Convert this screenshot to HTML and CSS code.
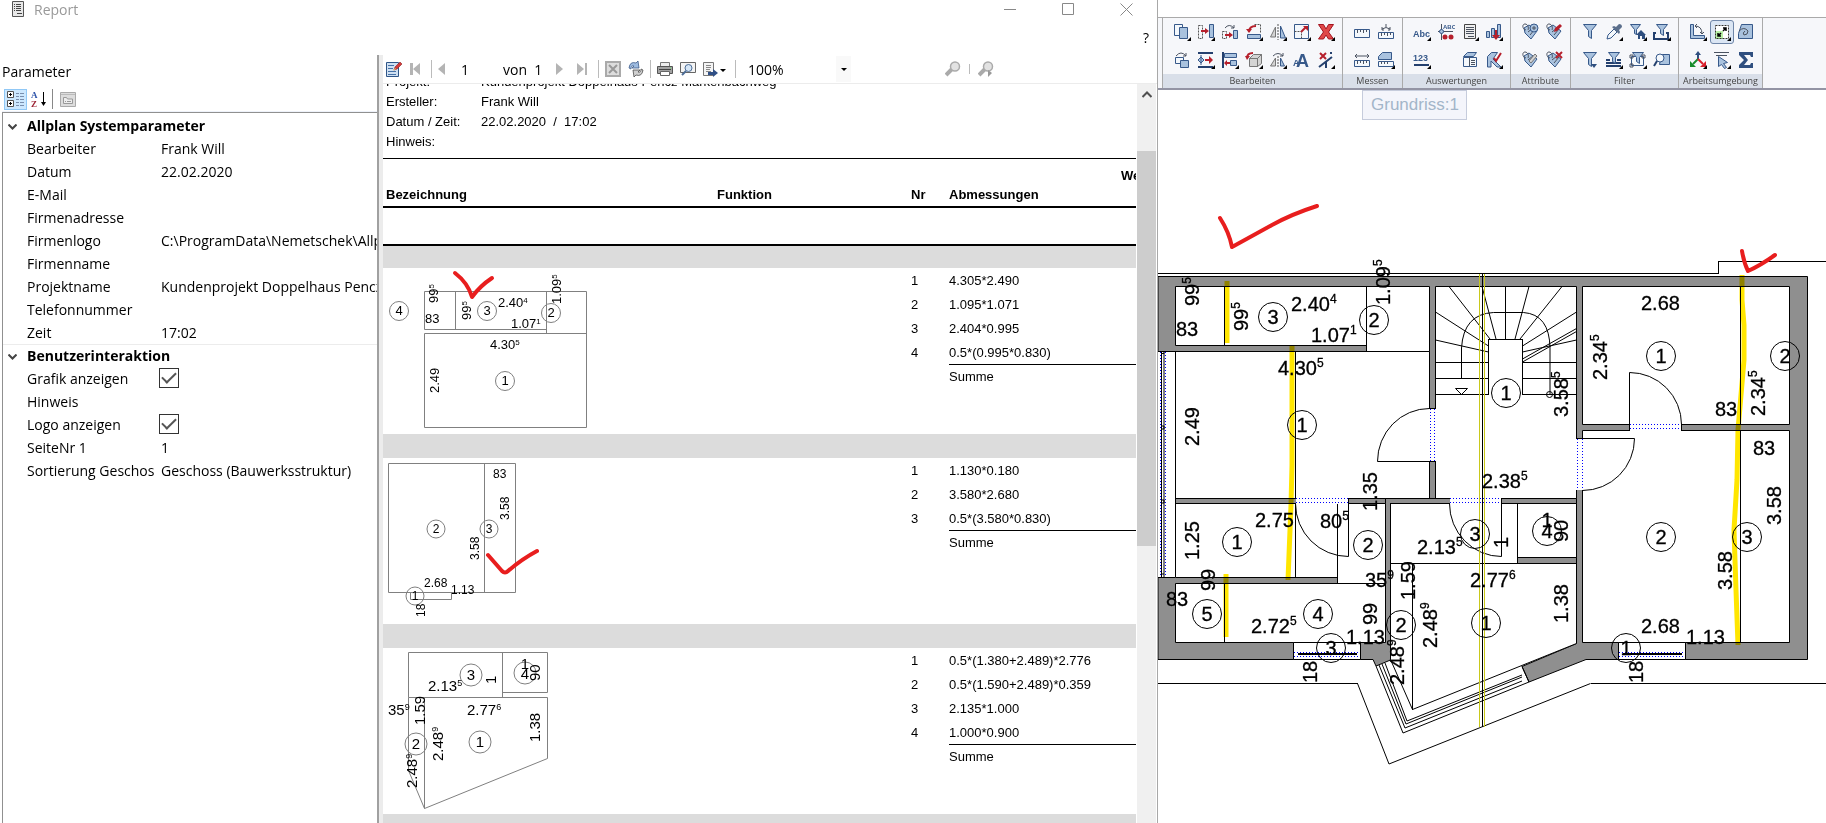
FILE: index.html
```html
<!DOCTYPE html>
<html lang="de">
<head>
    <meta charset="utf-8">
    <title>Report</title>
    <link rel="stylesheet" href="styles.css">
</head>
<body>

    <svg class="symbols">
        <symbol id="more" viewBox="0 0 18 18"><path d="M18 14v4h-4z" fill="#000"/></symbol>
        <symbol id="funnel" viewBox="0 0 18 18"><path class="blue" d="M2.500 1.500h13l-5 6v8l-3-2v-6z"/></symbol>
        <symbol id="tag" viewBox="0 0 18 18">
            <path class="blue" d="M3 5l5-3 8 6-6 8-6-6z"/>
            <path class="dark" d="M5 7C1 6 1 1 4 1s4 4 3 6"/>
            <path class="dark" d="M7 9l5-4M9 12l5-6"/>
        </symbol>
    </svg>

    <section class="report">
        <header class="titlebar">
            <svg class="doc-icon" width="12" height="16" viewBox="0 0 12 16"><path d="M.5.5h11v15H.500z" fill="#e8e8e8" stroke="#555"/><path d="M2 3.500h1m1 0h5M2 5.500h1m1 0h5M2 7.500h1m1 0h5M2 9.500h1m1 0h5M5 12.500h5" stroke="#444"/></svg>
            <h1>Report</h1>
            <button aria-label="Minimieren"><svg width="13" height="13"><path d="M0 6.500h12" stroke="#888"/></svg></button>
            <button aria-label="Maximieren"><svg width="13" height="13"><path d="M.5.5h11v11H.500z" fill="none" stroke="#888"/></svg></button>
            <button aria-label="Schließen"><svg width="13" height="13"><path d="M.5.5l12 12m0-12l-12 12" stroke="#888"/></svg></button>
        </header>
        <div class="helpbar"><button>?</button></div>

        <div class="panes">
            <aside class="params">
                <h2>Parameter</h2>
                <div class="param-tools">
                    <button class="active" aria-label="Kategorien"><svg width="18" height="16"><path d="M.5.5h6v6h-6zM.5 9.500h6v6h-6z" fill="#fff" stroke="#555"/><path d="M2 3.500h3M3.500 2v3M2 12.500h3M3.500 11v3" stroke="#000"/><path d="M9 2.500h3m1 0h4M9 5.500h3m1 0h4M9 8.500h3m1 0h4M9 11.500h3m1 0h4M9 14.500h3m1 0h4" stroke="#7a8fae"/></svg></button>
                    <button aria-label="Alphabetisch"><svg width="16" height="16"><text x="0" y="7" class="az a">A</text><text x="0" y="16" class="az z">Z</text><path d="M12.500 1v12" stroke="#000"/><path d="M10 11h5l-2.500 4z"/></svg></button>
                    <span class="sep"></span>
                    <button aria-label="Eigenschaftenseiten"><svg width="16" height="15"><path d="M.5.5h15v14H.500z" fill="#ddd" stroke="#aaa"/><path d="M1 2.500h14" stroke="#bbb"/><path d="M3.500 11.500v-6h3l1 1.500h5v4.500z" fill="#eee" stroke="#999"/><path d="M5 9.500h1m1 0h4" stroke="#999"/></svg></button>
                </div>
                <table class="props">
                    <tr class="cat"><td><svg width="9" height="6"><path d="M.5.5l4 4 4-4"/></svg></td><th colspan="2">Allplan Systemparameter</th></tr>
                    <tr><td></td><td>Bearbeiter</td><td>Frank Will</td></tr>
                    <tr><td></td><td>Datum</td><td>22.02.2020</td></tr>
                    <tr><td></td><td>E-Mail</td><td></td></tr>
                    <tr><td></td><td>Firmenadresse</td><td></td></tr>
                    <tr><td></td><td>Firmenlogo</td><td>C:\ProgramData\Nemetschek\Allplan</td></tr>
                    <tr><td></td><td>Firmenname</td><td></td></tr>
                    <tr><td></td><td>Projektname</td><td>Kundenprojekt Doppelhaus Pencz</td></tr>
                    <tr><td></td><td>Telefonnummer</td><td></td></tr>
                    <tr><td></td><td>Zeit</td><td>17:02</td></tr>
                    <tr class="cat line"><td><svg width="9" height="6"><path d="M.5.5l4 4 4-4"/></svg></td><th colspan="2">Benutzerinteraktion</th></tr>
                    <tr><td></td><td><label for="grafik">Grafik anzeigen</label></td><td><input type="checkbox" id="grafik" checked></td></tr>
                    <tr><td></td><td>Hinweis</td><td></td></tr>
                    <tr><td></td><td><label for="logo">Logo anzeigen</label></td><td><input type="checkbox" id="logo" checked></td></tr>
                    <tr><td></td><td>SeiteNr 1</td><td>1</td></tr>
                    <tr><td></td><td>Sortierung Geschosse</td><td>Geschoss (Bauwerksstruktur)</td></tr>
                </table>
            </aside>

            <div class="viewer">
                <div class="viewer-tools">
                    <button aria-label="Bearbeiten"><svg width="16" height="16"><path d="M.5 1.500h12v14H.500z" fill="#cfe0f2" stroke="#2f5688"/><path d="M2 4.500h6M2 7.500h5M2 10.500h8M2 13.500h8" stroke="#4672a8"/><path d="M8 9l1-3 5-5 2 2-5 5z" fill="#d33b3b" stroke="#8d2222" stroke-width=".6"/><path d="M7 10l2-3 1 1z" fill="#e8c070"/></svg></button>
                    <button class="first" aria-label="Erste Seite"><svg width="11" height="12"><path d="M0 0h3v12H0zM10 0v12L3 6z" fill="#b4b4b4"/></svg></button>
                    <span class="sep"></span>
                    <button class="prev" aria-label="Vorherige Seite"><svg width="7" height="12"><path d="M7 0v12L0 6z" fill="#b4b4b4"/></svg></button>
                    <input type="text" class="page" aria-label="Seite" value="1">
                    <span class="total">von&nbsp; 1</span>
                    <button class="next" aria-label="Nächste Seite"><svg width="7" height="12"><path d="M0 0v12l7-6z" fill="#b4b4b4"/></svg></button>
                    <button class="last" aria-label="Letzte Seite"><svg width="11" height="12"><path d="M8 0h2v12H8zM0 0v12l7-6z" fill="#b4b4b4"/></svg></button>
                    <span class="sep"></span>
                    <button aria-label="Abbrechen"><svg width="16" height="16"><path d="M1 1h14v14H1z" fill="#ddd" stroke="#aaa" stroke-width="2"/><path d="M4 4l8 8m0-8l-8 8" stroke="#999" stroke-width="2"/></svg></button>
                    <button class="refresh" aria-label="Aktualisieren"><svg width="16" height="16"><path d="M1 7Q2 0 8 2l2-2 1 7H4l2-2Q3 4 3 8z" fill="#9dbbe0" stroke="#3d5c8a" stroke-width=".8"/><path d="M15 9q-1 7-7 5l-2 2-1-7h7l-2 2q3 1 3-3z" fill="#cfcfcf" stroke="#4d4d4d" stroke-width=".8"/></svg></button>
                    <span class="sep"></span>
                    <button aria-label="Drucken"><svg width="16" height="16"><path d="M3.500 1.500h9v4h-9z" fill="#eee" stroke="#777"/><path d="M.5 5.500h15v7H.500z" fill="#a2a2a2" stroke="#555"/><path d="M2 8.500h12" stroke="#444"/><path d="M3.500 10.500h9v4h-9z" fill="#fff" stroke="#666"/><path d="M13 7h1" stroke="#6d6"/></svg></button>
                    <button class="gap" aria-label="Seitenansicht"><svg width="16" height="16"><path d="M.5 1.500h15v10H.500z" fill="#f4f4f4" stroke="#666"/><circle cx="8.500" cy="7" r="3.500" fill="#d5e6f7" stroke="#4d6d96"/><path d="M6 10l-4 4" stroke="#4d6d96" stroke-width="2"/></svg></button>
                    <button class="gap export" aria-label="Exportieren"><svg width="23" height="16"><path d="M.5 1.500h10v13H.500z" fill="#f4f4f4" stroke="#777"/><path d="M3 4.500h5M3 6.500h5M3 8.500h4M3 10.500h5" stroke="#888"/><path d="M5 11h5V8l5 4-5 4v-2H5z" fill="#2f4f86"/><path d="M17 8h6l-3 3z"/></svg></button>
                    <span class="sep"></span>
                    <select class="zoom" aria-label="Zoom"><option>100%</option></select>
                    <span class="caret"><svg width="6" height="3"><path d="M0 0h6L3 3z"/></svg></span>
                    <button class="find" aria-label="Suchen"><svg width="16" height="16"><path d="M1 14l7-7" stroke="#aaa" stroke-width="4"/><circle cx="10" cy="5.500" r="4.500" fill="#e2e2e2" stroke="#aaa" stroke-width="1.500"/></svg></button>
                    <span class="sep small"></span>
                    <button aria-label="Weitersuchen"><svg width="16" height="16"><path d="M1 14l7-7" stroke="#aaa" stroke-width="4"/><circle cx="10" cy="5.500" r="4.500" fill="#e2e2e2" stroke="#aaa" stroke-width="1.500"/><path d="M10 9v7l4-4z" fill="#999"/></svg></button>
                </div>

                <div class="page-area">
                    <div class="sheet">
                        <dl class="meta">
                            <dt>Projekt:</dt><dd>Kundenprojekt Doppelhaus Pencz Markenbachweg</dd>
                            <dt>Ersteller:</dt><dd>Frank Will</dd>
                            <dt>Datum / Zeit:</dt><dd>22.02.2020&nbsp; /&nbsp; 17:02</dd>
                            <dt>Hinweis:</dt><dd></dd>
                        </dl>
                        <table class="result">
                            <colgroup><col class="c-bez"><col class="c-fun"><col class="c-nr"><col class="c-abm"><col></colgroup>
                            <thead>
                                <tr class="over"><td colspan="4"></td><th>Wert</th></tr>
                                <tr class="heads"><th>Bezeichnung</th><th>Funktion</th><th>Nr</th><th colspan="2">Abmessungen</th></tr>
                                <tr class="blank"><td colspan="5"></td></tr>
                            </thead>
                            <tbody>
                                <tr class="band top"><td colspan="5"></td></tr>
                                <tr>
                                    <td colspan="2" rowspan="6" class="sketch">
                                        <svg width="330" height="166" viewBox="383 268 330 166">
                                            <path class="thin" d="M424.500 329.500v-38h162v136h-162v-94h162M424.500 329.500h122M455.500 291.500v38M546.500 291.500v42"/>
                                            <g class="thin"><circle cx="399" cy="311" r="9.500"/><circle cx="487" cy="311" r="9.500"/><circle cx="551" cy="313" r="9.500"/><circle cx="505" cy="381" r="9.500"/></g>
                                            <g class="t13">
                                                <g class="mid"><text x="399" y="315">4</text><text x="487" y="315">3</text><text x="551" y="317">2</text><text x="505" y="385">1</text></g>
                                                <text x="438" y="303" transform="rotate(-90 438 303)">99<tspan dy="-4">5</tspan></text>
                                                <text x="425" y="323">83</text>
                                                <text x="471" y="320" transform="rotate(-90 471 320)">99<tspan dy="-4">5</tspan></text>
                                                <text x="498" y="307">2.40<tspan dy="-4">4</tspan></text>
                                                <text x="511" y="328">1.07<tspan dy="-4">1</tspan></text>
                                                <text x="561" y="304" transform="rotate(-90 561 304)">1.09<tspan dy="-4">5</tspan></text>
                                                <text x="490" y="349">4.30<tspan dy="-4">5</tspan></text>
                                                <text x="439" y="393" transform="rotate(-90 439 393)">2.49</text>
                                            </g>
                                            <path class="tick" d="M455 273q13 10 17 24q8-11 20-19"/>
                                        </svg>
                                    </td>
                                    <td>1</td><td colspan="2">4.305*2.490</td>
                                </tr>
                                <tr><td>2</td><td colspan="2">1.095*1.071</td></tr>
                                <tr><td>3</td><td colspan="2">2.404*0.995</td></tr>
                                <tr><td>4</td><td colspan="2">0.5*(0.995*0.830)</td></tr>
                                <tr class="sum"><td></td><td colspan="2">Summe</td></tr>
                                <tr class="rest"><td colspan="3"></td></tr>

                                <tr class="band"><td colspan="5"></td></tr>
                                <tr>
                                    <td colspan="2" rowspan="5" class="sketch">
                                        <svg width="330" height="166" viewBox="383 458 330 166">
                                            <path class="thin" d="M388.500 463.500h127v129h-127zM484.500 463.500v129M410.500 592.500v7h41v-7"/>
                                            <g class="thin"><circle cx="436" cy="529" r="9"/><circle cx="489" cy="529" r="9"/><circle cx="415" cy="596" r="9"/></g>
                                            <g class="t12">
                                                <g class="mid"><text x="436" y="533">2</text><text x="489" y="533">3</text><text x="415" y="600">1</text></g>
                                                <text x="493" y="478">83</text>
                                                <text x="509" y="520" transform="rotate(-90 509 520)">3.58</text>
                                                <text x="479" y="560" transform="rotate(-90 479 560)">3.58</text>
                                                <text x="424" y="587">2.68</text>
                                                <text x="451" y="594">1.13</text>
                                                <text x="425" y="617" transform="rotate(-90 425 617)">18</text>
                                            </g>
                                            <path class="tick" d="M488 555l14 16q3 3 6 0q14-12 29-20"/>
                                        </svg>
                                    </td>
                                    <td>1</td><td colspan="2">1.130*0.180</td>
                                </tr>
                                <tr><td>2</td><td colspan="2">3.580*2.680</td></tr>
                                <tr><td>3</td><td colspan="2">0.5*(3.580*0.830)</td></tr>
                                <tr class="sum"><td></td><td colspan="2">Summe</td></tr>
                                <tr class="rest long"><td colspan="3"></td></tr>

                                <tr class="band"><td colspan="5"></td></tr>
                                <tr>
                                    <td colspan="2" rowspan="6" class="sketch">
                                        <svg width="330" height="166" viewBox="383 648 330 166">
                                            <path class="thin" d="M408.500 697.500v-45h139v40h-45M502.500 652.500v45M408.500 697.500h139v61l-123 50v-111M408.500 697.500v73l16 38"/>
                                            <g class="thin"><circle cx="471" cy="675" r="11"/><circle cx="525" cy="673" r="11"/><circle cx="416" cy="744" r="11"/><circle cx="480" cy="742" r="11"/></g>
                                            <g class="t15">
                                                <g class="mid"><text x="471" y="680">3</text><text x="525" y="679">4</text><text x="525" y="669">1</text><text x="416" y="749">2</text><text x="480" y="747">1</text></g>
                                                <text x="428" y="691">2.13<tspan dy="-5">5</tspan></text>
                                                <text x="496" y="684" transform="rotate(-90 496 684)">1</text>
                                                <text x="540" y="681" transform="rotate(-90 540 681)">90</text>
                                                <text x="388" y="715">35<tspan dy="-5">9</tspan></text>
                                                <text x="425" y="725" transform="rotate(-90 425 725)">1.59</text>
                                                <text x="467" y="715">2.77<tspan dy="-5">6</tspan></text>
                                                <text x="443" y="761" transform="rotate(-90 443 761)">2.48<tspan dy="-5">9</tspan></text>
                                                <text x="417" y="788" transform="rotate(-90 417 788)">2.48<tspan dy="-5">9</tspan></text>
                                                <text x="540" y="742" transform="rotate(-90 540 742)">1.38</text>
                                            </g>
                                        </svg>
                                    </td>
                                    <td>1</td><td colspan="2">0.5*(1.380+2.489)*2.776</td>
                                </tr>
                                <tr><td>2</td><td colspan="2">0.5*(1.590+2.489)*0.359</td></tr>
                                <tr><td>3</td><td colspan="2">2.135*1.000</td></tr>
                                <tr><td>4</td><td colspan="2">1.000*0.900</td></tr>
                                <tr class="sum"><td></td><td colspan="2">Summe</td></tr>
                                <tr class="rest"><td colspan="3"></td></tr>
                                <tr class="band"><td colspan="5"></td></tr>
                            </tbody>
                        </table>
                    </div>
                    <div class="scrollbar">
                        <button aria-label="Nach oben"><svg width="10" height="7"><path d="M.5 6l4.500-4.500L9.500 6" fill="none" stroke="#505050" stroke-width="2"/></svg></button>
                        <div class="thumb"></div>
                    </div>
                </div>
            </div>
        </div>
    </section>

    <main class="cad">
        <nav class="ribbon">
            <div class="group g7">
                <div class="tools">
                    <button aria-label="Kopieren"><svg viewBox="0 0 18 18"><path class="white" d="M1.500 1.500h8v11h-8z"/><path class="blue" d="M6.500 4.500h8v11h-8z"/><use href="#more"/></svg></button>
                    <button aria-label="Verschieben"><svg viewBox="0 0 18 18"><path class="dash" d="M1.500 2.500h4v13h-4z"/><path class="blue" d="M12.500 1.500h4v13h-4z"/><path class="red" d="M4 7h4V5l4 3-4 3V9H4z"/><use href="#more"/></svg></button>
                    <button aria-label="Kopieren und einfügen"><svg viewBox="0 0 18 18"><path class="dark" d="M4 5q4-5 9 0l-3 0m3 0V2"/><path class="dash" d="M1.500 8.500h4v7h-4z"/><path class="blue" d="M12.500 7.500h4v8h-4z"/><path class="red" d="M4 11h4V9l4 3-4 3v-2H4z"/></svg></button>
                    <button aria-label="Drehen"><svg viewBox="0 0 18 18"><path class="dash" d="M9.500 1.500h6v8"/><path class="blue" d="M2.500 11.500h13v4h-13z"/><path class="redline" d="M4 9q0-6 7-6"/><path class="red" d="M1 6h6l-3 4z"/><use href="#more"/></svg></button>
                    <button aria-label="Spiegeln"><svg viewBox="0 0 18 18"><path class="gray" d="M6.500 4v10h-5z"/><path class="dash" d="M9 1v16"/><path class="blue" d="M11.500 3v12h5z"/><use href="#more"/></svg></button>
                    <button aria-label="Verzerren"><svg viewBox="0 0 18 18"><path class="white" d="M1.500 1.500h14v14h-14z"/><path class="dash" d="M1.500 8.500h7v7"/><path class="redline" d="M8 9l5-5"/><path class="red" d="M10 3h5v5z"/><use href="#more"/></svg></button>
                    <button aria-label="Löschen"><svg viewBox="0 0 18 18"><path d="M1.500 1.500h5L9 6l2.500-4.500h5L11.500 9l5 7h-5L9 12l-2.500 4h-5l5-7z" fill="#e04848" stroke="#a31420"/><use href="#more"/></svg></button>
                    <button aria-label="Duplizieren"><svg viewBox="0 0 18 18"><path class="dark" d="M3 5q5-6 10 0h-3m3 0V2"/><path class="white" d="M2.500 6.500h8v6h-8z"/><path class="blue" d="M7.500 9.500h8v7h-8z"/></svg></button>
                    <button aria-label="Abstand"><svg viewBox="0 0 18 18"><path class="heavy" d="M1 2h15M1 16h15"/><path class="blue" d="M1 9l3-3 3 3-3 3zM4 4v10"/><path class="red" d="M8 8h4V5l4 4-4 4v-3H8z"/><use href="#more"/></svg></button>
                    <button aria-label="Ausrichten"><svg viewBox="0 0 18 18"><path class="heavy" d="M2 1v16"/><path class="blue" d="M3.500 2.500h12v4h-12zM9.500 9.500h6v5h-6z"/><path class="red" d="M9 11H6V9l-3 3 3 3v-2h3z"/><use href="#more"/></svg></button>
                    <button aria-label="3D drehen"><svg viewBox="0 0 18 18"><path class="gray" d="M4.500 7.500h8v8h-8zM4.500 7.500l4-4h8l-4 4zM12.500 7.500l4-4v9l-4 3z"/><path class="redline" d="M2 7q0-5 6-5"/><path class="red" d="M0 5h5l-3 4z"/><use href="#more"/></svg></button>
                    <button aria-label="Spiegeln und kopieren"><svg viewBox="0 0 18 18"><path class="dark" d="M4 5q5-5 10 0h-3m3 0V2"/><path class="gray" d="M6.500 7v8h-5z"/><path class="dash" d="M9 5v12"/><path class="blue" d="M11.500 7v8h4z"/><use href="#more"/></svg></button>
                    <button aria-label="Text ändern"><svg viewBox="0 0 18 18"><text x="0" y="15" class="ic s9">A</text><text x="3" y="16" class="ic s18">A</text></svg></button>
                    <button aria-label="Punkt löschen"><svg viewBox="0 0 18 18"><path class="redline" d="M3 2l6 6m0-6L3 8"/><path class="heavy" d="M2 16L15 6M9 10v7M14 1v2"/><use href="#more"/></svg></button>
                </div>
                <span>Bearbeiten</span>
            </div>
            <div class="group g2">
                <div class="tools">
                    <button aria-label="Messen"><svg viewBox="0 0 18 18"><path class="white" d="M1.500 6.500h15v8h-15z"/><path class="dark" d="M4.500 7v3M7.500 7v2M10.500 7v3M13.500 7v2"/></svg></button>
                    <button aria-label="Winkel messen"><svg viewBox="0 0 18 18"><path class="white" d="M1.500 9.500h15v6h-15z"/><path class="dark" d="M4.500 10v3M7.500 10v2M10.500 10v3M13.500 10v2M5 6q4-3 8 0M9 4V1M5 4v3h2m6-3v3h-2"/></svg></button>
                    <button aria-label="Länge messen"><svg viewBox="0 0 18 18"><path class="white" d="M1.500 9.500h15v6h-15z"/><path class="dark" d="M4.500 10v3M7.500 10v2M10.500 10v3M13.500 10v2M2 5h14M4 3L2 5l2 2M14 3l2 2-2 2"/></svg></button>
                    <button aria-label="Fläche messen"><svg viewBox="0 0 18 18"><path class="blue" d="M1.500 8.500v-3l4-4h9v7z"/><path class="white" d="M1.500 10.500h15v5h-15z"/><path class="dark" d="M4.500 11v2M7.500 11v2M10.500 11v2"/><use href="#more"/></svg></button>
                </div>
                <span>Messen</span>
            </div>
            <div class="group g4">
                <div class="tools">
                    <button aria-label="Beschriften"><svg viewBox="0 0 18 18"><text x="0" y="14" class="ic s9">Abc</text><use href="#more"/></svg></button>
                    <button aria-label="Legende"><svg viewBox="0 0 18 18"><text x="6" y="6" class="ic s6">ABC</text><path class="dark" d="M4.500 1v16M1 8.500h15"/><circle class="blue" cx="4.500" cy="8.500" r="2"/><circle class="red" cx="8" cy="14" r="2.500"/><circle class="red" cx="14" cy="14" r="2.500"/></svg></button>
                    <button aria-label="Reports"><svg viewBox="0 0 18 18"><path d="M3.500 1.500h11v14h-11z" fill="#eee" stroke="#444"/><path class="dark" d="M5 4.500h8M5 6.500h8M5 8.500h8M5 10.500h8M7 13.500h6"/><use href="#more"/></svg></button>
                    <button aria-label="Mengen"><svg viewBox="0 0 18 18"><path class="blue" d="M1.500 8.500h3v6h-3zM6.500 5.500h3v9h-3zM12.500 1.500h3v13h-3z"/><path class="red" d="M7 12h3V7h2v5h3l-4 5z"/><use href="#more"/></svg></button>
                    <button aria-label="Nummerieren"><svg viewBox="0 0 18 18"><text x="0" y="10" class="ic s9">123</text><path class="heavy" d="M1 14h15"/><use href="#more"/></svg></button>
                    <span></span>
                    <button aria-label="Raumbuch"><svg viewBox="0 0 18 18"><path class="blue" d="M2.500 5.500l4-4h9l-3 4z"/><path class="white" d="M2.500 6.500h13v9h-13z"/><path class="dark" d="M8.500 6v9M10 9.500h4M10 11.500h4M10 13.500h4"/></svg></button>
                    <button aria-label="Bauteil prüfen"><svg viewBox="0 0 18 18"><path class="blue" d="M2.500 5.500l4-4h6L8 8l8 8h-4L6 10v6H2.500z"/><path class="redline" d="M9 7l2 3 5-8"/><use href="#more"/></svg></button>
                </div>
                <span>Auswertungen</span>
            </div>
            <div class="group g2">
                <div class="tools">
                    <button aria-label="Attribut zuweisen"><svg viewBox="0 0 18 18"><use href="#tag"/><circle class="blue" cx="13" cy="5" r="4"/><path class="dark" d="M13 3v4M11 5h4"/></svg></button>
                    <button aria-label="Attribut ändern"><svg viewBox="0 0 18 18"><use href="#tag"/><path d="M9 9l1-4 5-4 2 2-5 5z" fill="#b6202c"/></svg></button>
                    <button aria-label="Attribut übertragen"><svg viewBox="0 0 18 18"><use href="#tag"/><path class="gray" d="M8 10l6-7 2 2-6 7z"/></svg></button>
                    <button aria-label="Attribut löschen"><svg viewBox="0 0 18 18"><use href="#tag"/><path class="redline" d="M11 1l6 6m0-6l-6 6"/></svg></button>
                </div>
                <span>Attribute</span>
            </div>
            <div class="group g4">
                <div class="tools">
                    <button aria-label="Filter"><svg viewBox="0 0 18 18"><use href="#funnel"/></svg></button>
                    <button aria-label="Pipette"><svg viewBox="0 0 18 18"><path class="white" d="M2 16l1-4 6-6 3 3-6 6z"/><path class="steel" d="M7 4l7 7 1-2-1-2 3-3q0-3-3-3l-3 3-2-1z"/><use href="#more"/></svg></button>
                    <button aria-label="Architekturfilter"><svg viewBox="0 0 18 18"><path class="blue" d="M1.500 1.500h10l-4 5v5l-2-1v-4z"/><path class="navy" d="M7 12l5-5 5 5h-1v4h-3v-3h-2v3H9v-4z"/><use href="#more"/></svg></button>
                    <button aria-label="Filter in Klammer"><svg viewBox="0 0 18 18"><path class="blue" d="M3.500 1.500h11l-4 5v6l-3-2v-4z"/><path class="heavy" d="M3 10H1v6h14v-6h-2"/><use href="#more"/></svg></button>
                    <button aria-label="Elementfilter"><svg viewBox="0 0 18 18"><use href="#funnel"/><path class="navy" d="M10 13h6l-3 4z"/></svg></button>
                    <button aria-label="Layerfilter"><svg viewBox="0 0 18 18"><path class="heavy" d="M1 9h4M1 12h15M1 15h15M12 9h4"/><path class="blue" d="M3.500 1.500h11l-4 5v6l-3-2v-4z"/><use href="#more"/></svg></button>
                    <button aria-label="Bereichsfilter"><svg viewBox="0 0 18 18"><path class="white" d="M2.500 5.500h12v9h-12z"/><path class="blue" d="M3.500 1.500h11l-4 5v6l-3-2v-4z"/><path class="dark" d="M1 4h3v3H1zM13 4h3v3h-3zM1 13h3v3H1z"/><use href="#more"/></svg></button>
                    <button aria-label="Suchen in Flächen"><svg viewBox="0 0 18 18"><path class="blue" d="M8.500 3.500h8v10h-10z"/><circle class="white" cx="7" cy="7" r="4"/><path class="heavy" d="M4 10l-3 5"/></svg></button>
                </div>
                <span>Filter</span>
            </div>
            <div class="group g3">
                <div class="tools">
                    <button aria-label="Winkelsystem"><svg viewBox="0 0 18 18"><path class="blue" d="M1.500 1.500h3v11h11v3h-14z"/><path class="dark" d="M6 3q7 0 7 8M8 1L6 3l2 2M11 9l2 2 2-2"/><use href="#more"/></svg></button>
                    <button class="on" aria-label="Zoom alles"><svg viewBox="0 0 18 18"><path d="M2 2h14v14H2z" fill="#fff"/><path d="M2 8h8v8H2z" fill="#b7f0a5"/><path d="M2.500 2.500h13v13h-13z" fill="none" stroke="#333" stroke-dasharray="2 1"/><path d="M10 8l3-3m-3 0h3v3M8 10l-3 3m3 0H5v-3" stroke="#000" stroke-width="1.500" fill="none"/><use href="#more"/></svg></button>
                    <button aria-label="Ansicht zurück"><svg viewBox="0 0 18 18"><path class="blue" d="M4.500 1.500h11v14h-14v-5z"/><path class="dark" d="M2 8q5-5 9 0q0 4-4 4q-2-2 1-4"/></svg></button>
                    <button aria-label="Koordinaten"><svg viewBox="0 0 18 18"><path d="M9 8v-6" stroke="#2f4f7f" stroke-width="2"/><path d="M6 4l3-4 3 4z" fill="#2f4f7f"/><path d="M9 8l-5 5" stroke="#188c2c" stroke-width="2"/><path d="M1 16v-6l6 6z" fill="#188c2c"/><path d="M9 8l5 5" stroke="#d8202c" stroke-width="2"/><path d="M17 16v-6l-6 6z" fill="#d8202c"/><use href="#more"/></svg></button>
                    <button aria-label="Auswahl"><svg viewBox="0 0 18 18"><path class="dark" d="M1 1.500h15M3 4.500h11"/><path class="blue" d="M5.500 5.500l9 6-4 1 3 4-2 1-3-4-3 2z"/><use href="#more"/></svg></button>
                    <button aria-label="Summe"><svg viewBox="0 0 18 18"><path class="navy" d="M2 1h14v5h-2l-1-2H7l4 5-4 5h6l1-2h2v5H2v-3l5-5-5-5z"/></svg></button>
                </div>
                <span>Arbeitsumgebung</span>
            </div>
        </nav>

        <div class="canvas">
            <div class="viewname">Grundriss:1</div>
            <svg class="plan" viewBox="1158 90 668 733">
                <!-- walls -->
                <g class="wall">
                    <path d="M1158 276.500h649.500v383H1586L1529 682l-7-15.500 54.500-23V498.500H1390.500V660L1376 666l-3-6.500H1158z"/>
                </g>
                <!-- rooms -->
                <g class="room">
                    <path d="M1175.500 286.500h254v65h-63v-6h-191z"/>
                    <path d="M1175.500 351.500h254v147h-254z"/>
                    <path d="M1175.500 503.500h210v80h-48v-6h-162z"/>
                    <path d="M1175.500 583.500h210v59h-210z"/>
                    <path d="M1435.500 286.500h141v212h-141z"/>
                    <path d="M1582.500 286.500h207v138h-207zM1582.500 430.500h207v212h-207z"/>
                    <path d="M1390.500 503.500h186v140l-164 66-22-50z"/>
                    <path d="M1293.500 642.500h67v17h-67zM1618.500 642.500h67v17h-67z"/>
                </g>
                <path d="M1158 352h17v225h-17zM1391 499h185v4h-185z" fill="#fff"/>
                <path d="M1385.500 498.500h191v5h-191zM1517.500 557.500h59v6h-59z" fill="#8f8f8f" stroke="#000"/>
                <path d="M1386 499h4v8h-4z" fill="#8f8f8f"/>
                <g class="pen crisp">
                    <path d="M1158 273.500h560.500v-12H1826M1158 683.500h199.500"/>
                    <path d="M1590.500 683.500H1826M1158 351.500h17M1158 577.500h17M1175.500 351v226"/>
                    <path d="M1224.500 286.500v59M1366.500 286.500v65M1295.500 351.500v147M1295.500 503.500v74M1337.500 503.500v80M1224.500 583.500v59"/>
                    <path d="M1740.500 286.500v138M1740.500 430.500v212M1517.500 503.500v60M1390.500 563.500h186M1412.500 563.500v146"/>
                    <!-- stairs -->
                    <path d="M1488.500 394.500v-55h34v55M1435.500 362.500h53M1435.500 378.500h53M1435.500 394.500h53M1522.500 362.500h54M1522.500 378.500h54M1522.500 394.500h54M1505.500 286.500v53"/>
                </g>
                <g class="pen">
                    <path d="M1357.500 683.500l31.500 80.500 201.500-80.500M1376 666l27 67 126-51M1522 666.500l7 15.500"/>
                    <path d="M1379 665l26 63 117-47M1382 664l24 60 116-47M1385 663l22 58 115-46"/>
                    <path d="M1515 339l14-52.500M1520 339l42-52.500M1522.500 346l54-34M1522.500 352l54-12M1522.500 359l54-30.500M1522.500 362l54-30.500"/>
                    <path d="M1496 339l-14-52.500M1490 339l-41-52.500M1488.500 346l-53-34M1488.500 352l-53-12"/>
                    <path d="M1461.500 378v-30q2-34 32-35.500h30q26 2 26.500 35.500v46.500M1455.500 388.500h12l-6 6z"/>
                    <circle cx="1549.500" cy="394.500" r="3"/>
                </g>
                <!-- door and window openings -->
                <path d="M1296 498h52v6h-52zM1450 498h51v6h-51zM1429 409h7v52h-7zM1630 424h51v7h-51zM1576 439h7v51h-7z" fill="#fff"/>
                <g class="pen">
                    <path d="M1295.500 503.500a53 53 0 0 0 53 53V498.500M1449.500 503.500a52 53 0 0 0 52 53V498.500"/>
                    <path d="M1435.500 461.500h-58a52 53 0 0 1 52-53h6"/>
                    <path d="M1629.500 430.500v-58a52 52 0 0 1 52 52v6M1576.500 438.500h58a52 52 0 0 1-52 52"/>
                    <path d="M1161.500 352v225M1164 352v225M1161 353.500h3v-1M1161 426h3v3h-3M1161 500h3v3h-3M1161 574h3"/>
                </g>
                <path d="M1298 654h59M1623 654h59" stroke="#000" stroke-width="2"/>
                <path class="blueline" d="M1160.500 352v225M1165.500 352v225M1296 498.500h52M1296 502.500h52M1450 498.500h51M1450 502.500h51M1430.500 409v52M1434.500 409v52M1630 424.500h51M1630 428.500h51M1577.500 439v51M1582.500 439v51M1294 652.500h66M1294 656.500h66M1619 652.500h66M1619 656.500h66"/>
                <path d="M1479.500 274v453M1484.500 274v453" stroke="#c9c91c"/>
                <path d="M1482.500 274v453" stroke="#000"/>

                <g class="pen">
                    <circle cx="1273" cy="317" r="14.500"/><circle cx="1374" cy="320" r="14.500"/><circle cx="1302" cy="425" r="14.500"/>
                    <circle cx="1237" cy="542" r="14.500"/><circle cx="1368" cy="545" r="14.500"/><circle cx="1475" cy="534" r="14.500"/>
                    <circle cx="1207" cy="614" r="14.500"/><circle cx="1318" cy="614" r="14.500"/><circle cx="1331" cy="648" r="14.500"/>
                    <circle cx="1401" cy="625" r="14.500"/><circle cx="1486" cy="623" r="14.500"/>
                    <circle cx="1506" cy="393" r="14.500" fill="#fff"/>
                    <circle cx="1661" cy="356" r="14.500"/><circle cx="1785" cy="356" r="14.500"/><circle cx="1661" cy="537" r="14.500"/>
                    <circle cx="1747" cy="537" r="14.500"/><circle cx="1626" cy="648" r="14.500"/><circle cx="1547" cy="531" r="14.500"/>
                </g>
                <g class="t20">
                    <g class="mid">
                        <text x="1273" y="324">3</text><text x="1374" y="327">2</text><text x="1302" y="432">1</text>
                        <text x="1237" y="549">1</text><text x="1368" y="552">2</text><text x="1475" y="541">3</text>
                        <text x="1207" y="621">5</text><text x="1318" y="621">4</text><text x="1331" y="655">3</text>
                        <text x="1401" y="632">2</text><text x="1486" y="630">1</text><text x="1506" y="400">1</text>
                        <text x="1661" y="363">1</text><text x="1785" y="363">2</text><text x="1661" y="544">2</text>
                        <text x="1747" y="544">3</text><text x="1626" y="655">1</text><text x="1547" y="538">4</text><text x="1547" y="527">1</text>
                    </g>
                    <text x="1176" y="336">83</text>
                    <text x="1291" y="311">2.40<tspan dy="-8">4</tspan></text>
                    <text x="1311" y="342">1.07<tspan dy="-8">1</tspan></text>
                    <text x="1278" y="375">4.30<tspan dy="-8">5</tspan></text>
                    <text x="1255" y="527">2.75</text>
                    <text x="1320" y="528">80<tspan dy="-8">5</tspan></text>
                    <text x="1365" y="587">35<tspan dy="-8">9</tspan></text>
                    <text x="1417" y="554">2.13<tspan dy="-8">5</tspan></text>
                    <text x="1470" y="587">2.77<tspan dy="-8">6</tspan></text>
                    <text x="1166" y="606">83</text>
                    <text x="1251" y="633">2.72<tspan dy="-8">5</tspan></text>
                    <text x="1346" y="644">1.13</text>
                    <text x="1482" y="488">2.38<tspan dy="-8">5</tspan></text>
                    <text x="1641" y="310">2.68</text>
                    <text x="1641" y="633">2.68</text>
                    <text x="1686" y="644">1.13</text>
                    <text x="1715" y="416">83</text>
                    <text x="1753" y="455">83</text>

                    <text x="1199" y="306" transform="rotate(-90 1199 306)">99<tspan dy="-8">5</tspan></text>
                    <text x="1248" y="331" transform="rotate(-90 1248 331)">99<tspan dy="-8">5</tspan></text>
                    <text x="1390" y="305" transform="rotate(-90 1390 305)">1.09<tspan dy="-8">5</tspan></text>
                    <text x="1199" y="446" transform="rotate(-90 1199 446)">2.49</text>
                    <text x="1377" y="511" transform="rotate(-90 1377 511)">1.35</text>
                    <text x="1199" y="560" transform="rotate(-90 1199 560)">1.25</text>
                    <text x="1215" y="591" transform="rotate(-90 1215 591)">99</text>
                    <text x="1415" y="600" transform="rotate(-90 1415 600)">1.59</text>
                    <text x="1377" y="625" transform="rotate(-90 1377 625)">99</text>
                    <text x="1437" y="648" transform="rotate(-90 1437 648)">2.48<tspan dy="-8">9</tspan></text>
                    <text x="1404" y="685" transform="rotate(-90 1404 685)">2.48<tspan dy="-8">9</tspan></text>
                    <text x="1317" y="683" transform="rotate(-90 1317 683)">18</text>
                    <text x="1568" y="417" transform="rotate(-90 1568 417)">3.58<tspan dy="-8">5</tspan></text>
                    <text x="1607" y="380" transform="rotate(-90 1607 380)">2.34<tspan dy="-8">5</tspan></text>
                    <text x="1765" y="416" transform="rotate(-90 1765 416)">2.34<tspan dy="-8">5</tspan></text>
                    <text x="1781" y="525" transform="rotate(-90 1781 525)">3.58</text>
                    <text x="1732" y="590" transform="rotate(-90 1732 590)">3.58</text>
                    <text x="1568" y="542" transform="rotate(-90 1568 542)">90</text>
                    <text x="1568" y="623" transform="rotate(-90 1568 623)">1.38</text>
                    <text x="1508" y="548" transform="rotate(-90 1508 548)">1</text>
                    <text x="1643" y="683" transform="rotate(-90 1643 683)">18</text>
                </g>

                <!-- marker strokes -->
                <g class="marker">
                    <path d="M1227 281v62"/>
                    <path d="M1292 345v120l-1 40-3 75"/>
                    <path d="M1226 574v63"/>
                    <path d="M1742 275v25l2 25v35l-6 70-1 50-3 50 2 60 2 55"/>
                </g>
                <path class="tick" d="M1220 218q9 14 12 29q20-11 40-22t45-19M1742 251q2 12 6 20q13-6 27-16"/>
            </svg>
        </div>
    </main>

</body>
</html>
```
FILE: styles.css
```css
* {
    box-sizing: border-box;
}

body {
    margin: 0;
    height: 100vh;
    overflow: hidden;
    display: grid;
    grid-template-columns: minmax(0, 1158fr) minmax(0, 668fr);
    background: #fff;
    color: #000;
    font-family: "Open Sans", "Noto Sans", sans-serif;
    font-size: 14px;
}

button {
    border: 0;
    padding: 0;
    background: none;
    font: inherit;
    display: flex;
    align-items: center;
    justify-content: center;
}

.symbols {
    display: none;
}

/* report window */
.report {
    display: flex;
    flex-direction: column;
    min-height: 0;
    border-right: 1px solid #a8a8a8;
}

.titlebar {
    display: flex;
    align-items: center;
    height: 20px;
    padding: 0 2px 2px 12px;
}
.titlebar h1 {
    margin: 0 auto 0 10px;
    font-size: 14px;
    font-weight: normal;
    color: #999;
}
.titlebar button {
    width: 58px;
    height: 18px;
}

.helpbar {
    height: 35px;
    display: flex;
    justify-content: flex-end;
    align-items: center;
    padding-right: 8px;
}

.panes {
    flex: 1;
    min-height: 0;
    display: grid;
    grid-template-columns: 383px minmax(0, 1fr);
}

/* parameter list */
.params {
    display: flex;
    flex-direction: column;
    min-height: 0;
    border-right: 4px solid #ececec;
    box-shadow: inset -2px 0 #a0a0a0;
    padding: 0 2px;
}
.params h2 {
    margin: 0;
    height: 33px;
    line-height: 33px;
    font-size: 14px;
    font-weight: normal;
}
.param-tools {
    display: flex;
    align-items: center;
    height: 24px;
    padding: 0 0 1px 2px;
    border-bottom: 1px solid #eef2fa;
}
.param-tools button {
    width: 23px;
    height: 21px;
}
.param-tools .active {
    background: #cce8ff;
    border: 1px solid #90c8f6;
}
.param-tools .sep {
    width: 1px;
    height: 20px;
    margin: 0 3px 0 2px;
    background: #888;
}
.az {
    font: bold 9px "Liberation Serif", serif;
}
.a {
    fill: #2a50a8;
}
.z {
    fill: #9c2434;
}

.props {
    flex: 1;
    display: block;
    overflow: hidden;
    border: 1px solid #909090;
    border-width: 1px 0 0 1px;
    border-spacing: 0;
    padding-top: 1px;
    white-space: nowrap;
}
.props tbody {
    display: block;
}
.props tr {
    display: grid;
    grid-template-columns: 24px 134px minmax(0, 1fr);
    height: 23px;
}
.props td, .props th {
    padding: 0;
    line-height: 23px;
    text-align: left;
    overflow: hidden;
}
.props td:nth-child(2) {
    margin-right: 6px;
}
.props th {
    grid-column: span 2;
}
.props .cat td {
    padding-left: 5px;
}
.props .cat svg {
    vertical-align: middle;
    fill: none;
    stroke: #444;
    stroke-width: 2;
}
.props .line {
    border-top: 1px solid #ececec;
}
.props .line th, .props .line td {
    line-height: 21px;
}
.props input {
    appearance: none;
    display: grid;
    place-items: center;
    width: 20px;
    height: 20px;
    margin: 1px 0 0 -2px;
    border: 1px solid #333;
    background: #fff;
}
.props td:has(input) {
    overflow: visible;
}
.props input:checked::before {
    content: "";
    width: 6px;
    height: 12px;
    margin-bottom: 4px;
    border: solid #555;
    border-width: 0 2px 2px 0;
    transform: rotate(45deg);
}

/* report viewer */
.viewer {
    display: flex;
    flex-direction: column;
    min-height: 0;
}
.viewer-tools {
    flex: none;
    display: flex;
    align-items: center;
    height: 29px;
    padding-left: 3px;
    border-bottom: 1px solid #ececec;
}
.viewer-tools .sep {
    width: 1px;
    height: 18px;
    background: #bbb;
    margin: 0 6px 0 5px;
}
.viewer-tools .small {
    height: 10px;
    margin: 0 8px;
}
.viewer-tools .first {
    margin: 0 5px 0 8px;
}
.viewer-tools .prev {
    margin-right: 16px;
}
.page {
    width: 42px;
    border: 0;
    padding: 0;
    font: inherit;
}
.total {
    width: 53px;
}
.viewer-tools .last {
    margin: 0 5px 0 14px;
}
.refresh {
    margin: 0 1px 0 7px;
}
.gap {
    margin-left: 7px;
}
.export {
    margin-right: 4px;
}
.zoom {
    appearance: none;
    border: 0;
    background: none;
    width: 88px;
    margin-left: 6px;
    padding: 0;
    font: inherit;
}
.caret {
    display: grid;
    place-items: center;
    width: 15px;
    height: 26px;
    background: #f9f9f9;
}
.find {
    margin-left: 94px;
}

.page-area {
    flex: 1;
    min-height: 0;
    display: flex;
}
.sheet {
    flex: 1;
    min-width: 0;
    overflow: hidden;
    font-family: "Liberation Sans", Arial, sans-serif;
    font-size: 13px;
    display: flex;
    flex-direction: column;
    justify-content: flex-start;
}
.meta {
    flex: none;
    display: grid;
    grid-template-columns: 95px 1fr;
    grid-auto-rows: 20px;
    line-height: 20px;
    margin: -12px 0 0;
    padding: 0 0 6px 3px;
    border-bottom: 1px solid #000;
}
.meta dd {
    margin: 0;
}

.result {
    flex: none;
    width: 100%;
    table-layout: fixed;
    border-collapse: separate;
    border-spacing: 0;
}
.c-bez {
    width: 331px;
}
.c-fun {
    width: 194px;
}
.c-nr {
    width: 41px;
}
.c-abm {
    width: 172px;
}
.result th, .result td {
    padding: 0 0 0 3px;
    text-align: left;
    white-space: nowrap;
}
.result tr > :last-child {
    padding-left: 0;
}
.result tr {
    height: 24px;
}
.over th {
    padding-top: 9px !important;
}
.heads th {
    border-bottom: 2px solid #000;
    height: 25px;
}
.result .blank {
    height: 36px;
}
.result .band td {
    background: #dcdcdc;
}
.result .top td {
    border-top: 2px solid #000;
}
.result .sketch {
    padding: 0;
    height: 166px;
    vertical-align: top;
}
.result .sum td:last-child {
    border-top: 1px solid #000;
}
.result .rest {
    height: 46px;
}
.result .long {
    height: 70px;
}
.sketch svg {
    display: block;
}

.scrollbar {
    flex: none;
    width: 20px;
    background: #f0f0f0;
    border-right: 1px solid #fff;
    margin-left: 1px;
}
.scrollbar button {
    width: 100%;
    height: 20px;
}
.thumb {
    height: 395px;
    margin-top: 47px;
    background: #cdcdcd;
}

/* drawing window */
.cad {
    min-width: 0;
    display: flex;
    flex-direction: column;
}
.ribbon {
    flex: none;
    display: flex;
    height: 73px;
    margin-top: 17px;
    padding-left: 4px;
    background: #f6f7fa;
    border-top: 1px solid #aaa;
    border-bottom: 2px solid #9394a4;
}
.group {
    display: flex;
    flex-direction: column;
    justify-content: space-between;
    border-right: 1px solid #aaa;
}
.group:first-child {
    border-left: 1px solid #aaa;
}
.tools {
    display: grid;
    grid-template-columns: repeat(auto-fill, 24px);
    grid-auto-rows: 28px;
    padding: 0 4px 0 7px;
}
.g7 {
    width: 181px;
}
.g4 {
    width: 108px;
}
.g3 {
    width: 84px;
}
.g2 {
    width: 60px;
}
.group > span {
    height: 14px;
    line-height: 14px;
    background: #d9dfe9;
    color: #444;
    font-size: 9px;
    text-align: center;
}
.tools svg {
    width: 18px;
    height: 18px;
}
.tools .on {
    border: 1px solid #6f86a8;
    border-radius: 3px;
    background: #dbe6f4;
    height: 24px;
    align-self: center;
}
.blue {
    fill: #a9c2de;
    stroke: #37598a;
}
.white {
    fill: #f4f8fc;
    stroke: #37598a;
}
.gray {
    fill: #d4d4d4;
    stroke: #777;
}
.dark {
    fill: none;
    stroke: #4a5260;
}
.dash {
    fill: none;
    stroke: #555;
    stroke-dasharray: 2 1;
}
.heavy {
    fill: none;
    stroke: #24406e;
    stroke-width: 2;
}
.navy {
    fill: #2f4f7f;
}
.steel {
    fill: #5b6f8c;
}
.red {
    fill: #b6202c;
}
.redline {
    fill: none;
    stroke: #b6202c;
    stroke-width: 2;
}
.ic {
    font-family: "Liberation Sans", Arial, sans-serif;
    font-weight: bold;
    fill: #37598a;
}
.s6 {
    font-size: 6px;
}
.s9 {
    font-size: 9px;
}
.s18 {
    font-size: 18px;
}

.canvas {
    flex: 1;
    min-height: 0;
    position: relative;
    overflow: hidden;
    font-family: "Liberation Sans", Arial, sans-serif;
}
.viewname {
    position: absolute;
    top: 0;
    left: 204px;
    padding: 0 7px 0 8px;
    line-height: 28px;
    font-size: 17px;
    color: #a3b5c9;
    background: #f4f5fb;
    border: 1px solid #c6ccdc;
}
.plan {
    display: block;
    width: 100%;
}
.wall {
    fill: #8f8f8f;
    stroke: #000;
}
.room {
    fill: #fff;
    stroke: #000;
}
.pen {
    fill: none;
    stroke: #000;
}
.crisp {
    shape-rendering: crispEdges;
}
.thin {
    fill: none;
    stroke: #808080;
}
.blueline {
    fill: none;
    stroke: #00f;
    stroke-dasharray: 1 2;
}
.marker {
    fill: none;
    stroke: #ffe600;
    stroke-width: 5;
    mix-blend-mode: multiply;
}
.tick {
    fill: none;
    stroke: #e81e1e;
    stroke-width: 4;
    stroke-linecap: round;
    stroke-linejoin: round;
}
.mid {
    text-anchor: middle;
}
.t12 {
    font-size: 12px;
}
.t13 {
    font-size: 13px;
}
.t13 tspan {
    font-size: 8px;
}
.t15 {
    font-size: 15px;
}
.t15 tspan {
    font-size: 9px;
}
.t20 {
    font-size: 20px;
    stroke: #000;
    stroke-width: .3;
}
.t20 tspan {
    font-size: 12px;
}
```
